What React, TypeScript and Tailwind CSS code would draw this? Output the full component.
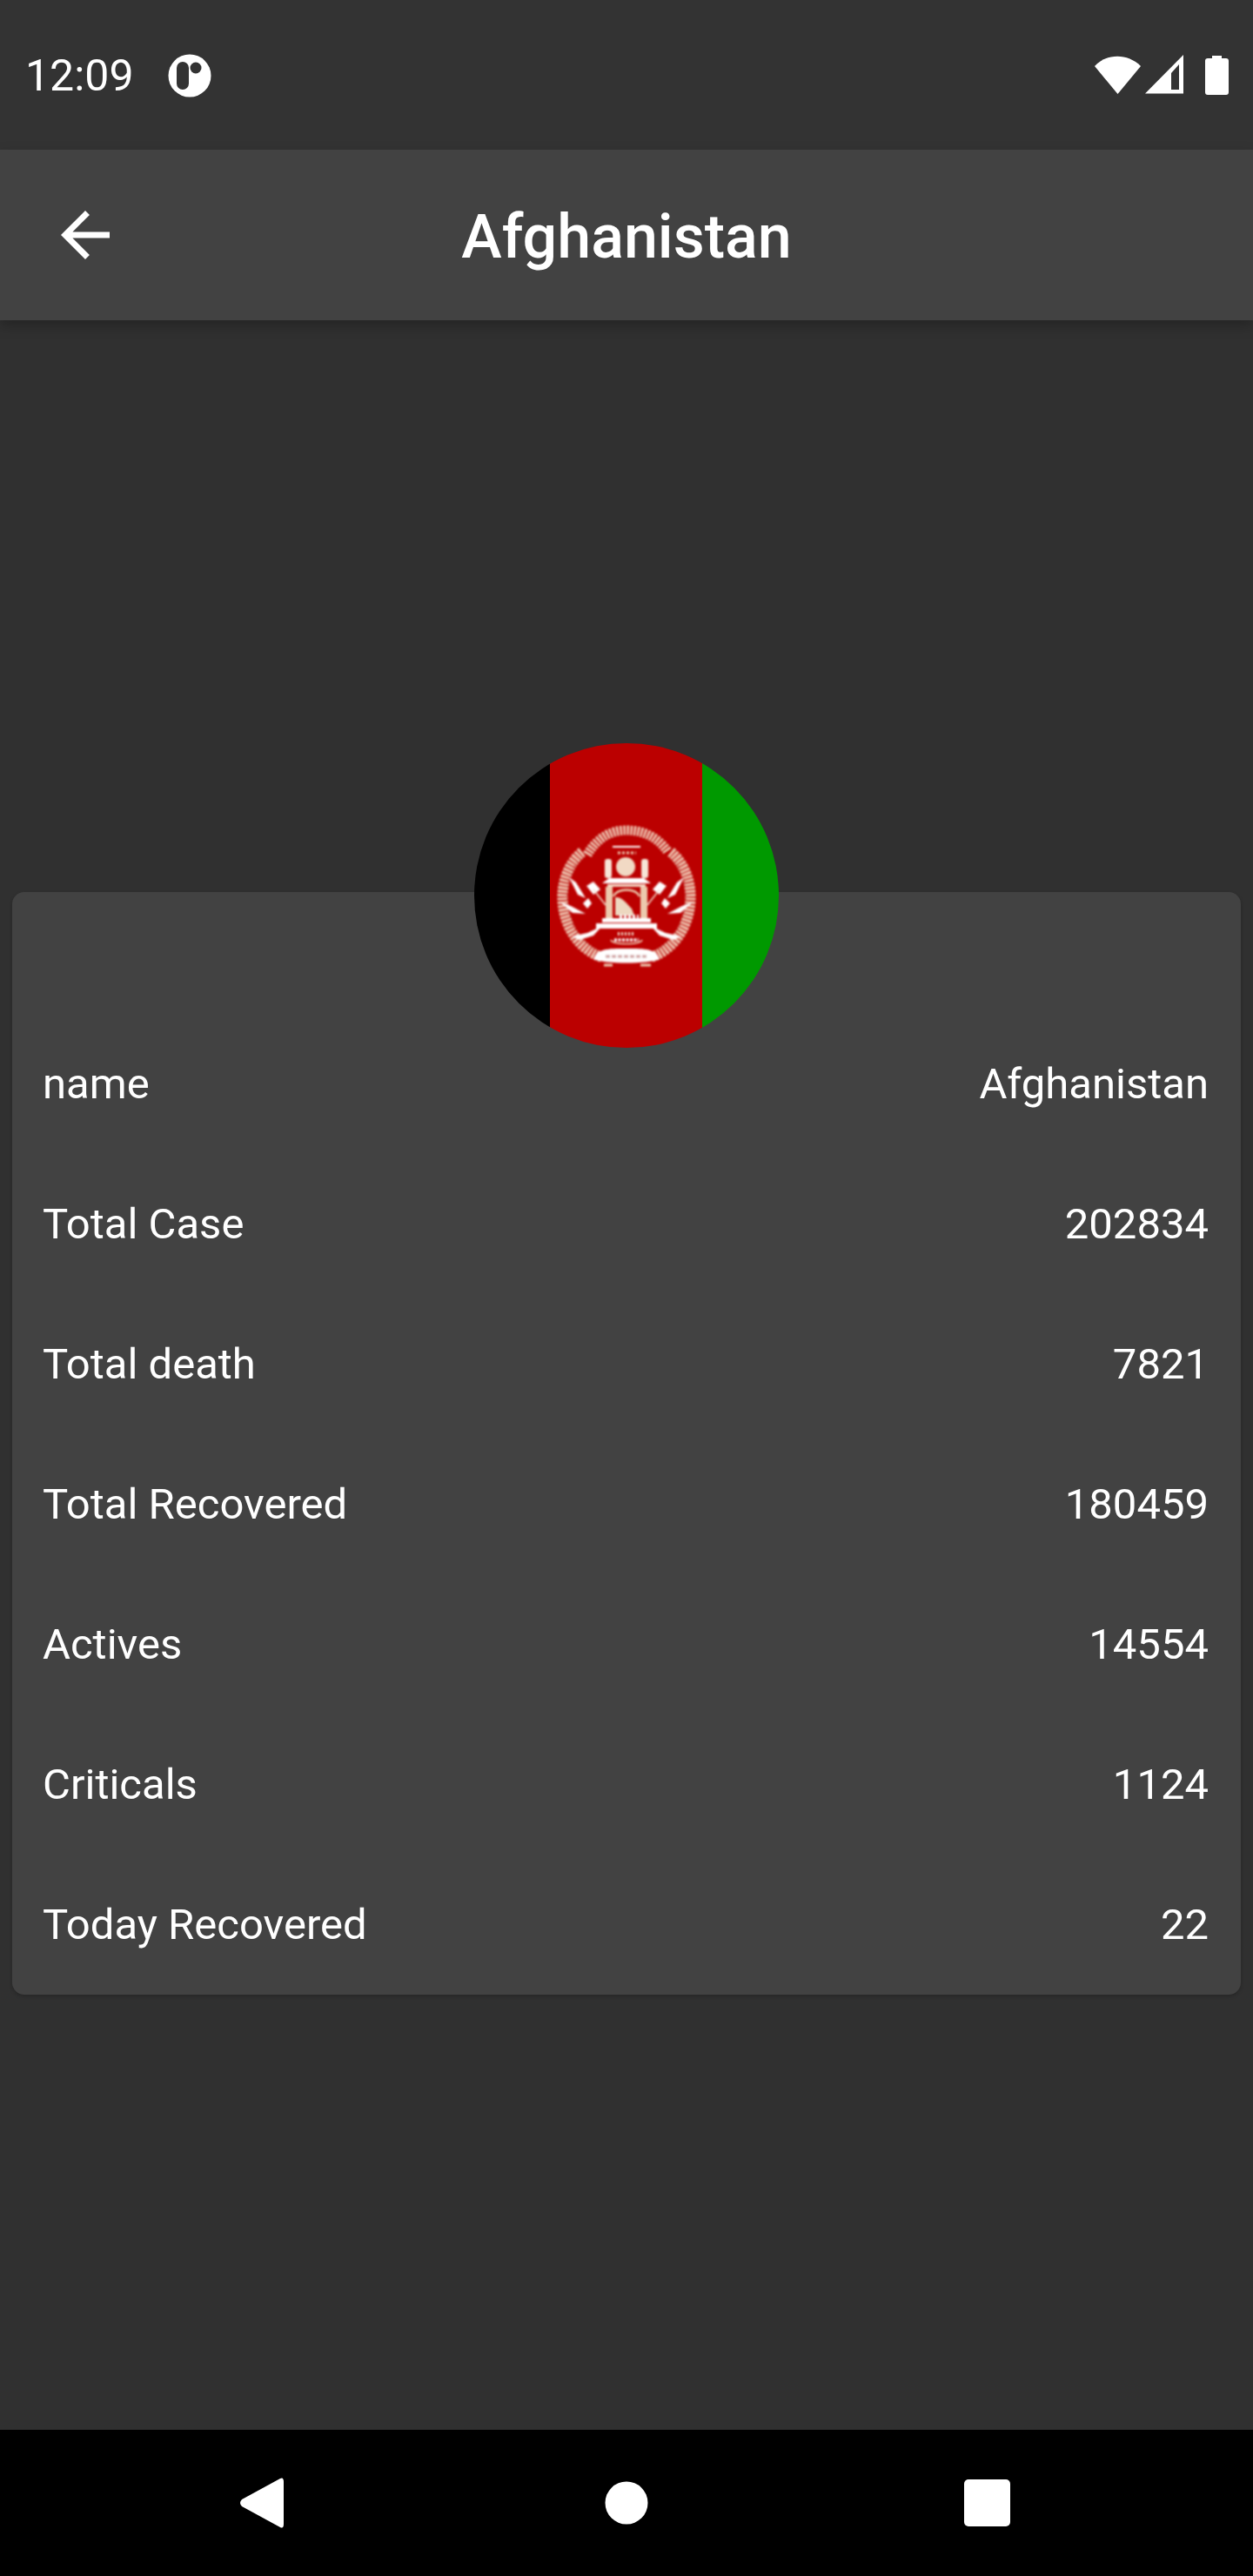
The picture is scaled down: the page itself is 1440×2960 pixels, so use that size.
import React from 'react';

const rows: [string, string][] = [
  ['name', 'Afghanistan'],
  ['Total Case', '202834'],
  ['Total death', '7821'],
  ['Total Recovered', '180459'],
  ['Actives', '14554'],
  ['Criticals', '1124'],
  ['Today Recovered', '22'],
];

const StatusIcons = () => (
  <svg width="160" height="50" viewBox="0 0 160 50" fill="#fff">
    {/* wifi */}
    <path d="M6 16 C20 1 44 1 59 16 L32.500 48 Z" />
    {/* signal */}
    <path fillRule="evenodd" d="M64 47.500 L108 3 V47.500 Z M94 43 H103 V14 L94 24 Z" />
    {/* battery */}
    <path d="M141 4 H152 V7 H157 Q160 7 160 10 V46 Q160 49 157 49 H136 Q133 49 133 46 V10 Q133 7 136 7 H141 Z" />
  </svg>
);

// half of the wreath, mirrored for the right side
const WreathSide = () => (
  <g fill="none" stroke="#f2d6c0">
    <path d="M49 49 C26 68 20 105 34 135 C42 152 56 165 72 170" strokeWidth="12" strokeDasharray="3 1.200" opacity="0.95" />
    <path d="M47 56 C31 74 27 104 38 131 C45 147 56 157 68 162" strokeWidth="1.500" strokeDasharray="2 3" stroke="#bb0000" />
    <path d="M34 78 L42 84 L53 102 L44 98 Z" fill="#fff" stroke="none" />
    <path d="M23 106 L36 111 L53 120 L38 119 Z" fill="#fff" stroke="none" />
    <path d="M37 146 L55 142 L72 134 L62 145 L46 150 Z" fill="#fff" stroke="none" />
    <path d="M54 88 L62 83 L70 92 L62 98 Z" fill="#fff" stroke="none" />
    <path d="M50 108 L56 102 L60 108 L55 114 Z" fill="#fff" stroke="none" />
    <path d="M62 92 L76 110" strokeWidth="1.500" stroke="#f3e0d0" />
  </g>
);

const Emblem = () => (
  <g transform="translate(75 76)" filter="url(#soft)">
    {/* calligraphy arc */}
    <path d="M55 52 C68 30 85 24 100 24 C118 24 135 31 147 48" fill="none" stroke="#f2d6c0" strokeWidth="11" strokeDasharray="2.500 1.500" />
    <path d="M84 43 H116" stroke="#fff" strokeWidth="2" />
    <path d="M90 50 H111" stroke="#eecdb4" strokeWidth="3" strokeDasharray="3 2" />
    <WreathSide />
    <g transform="translate(200 0) scale(-1 1)">
      <WreathSide />
    </g>
    {/* minarets and dome */}
    <rect x="75" y="57" width="8" height="22" rx="3" fill="#f7e6d8" />
    <rect x="117" y="57" width="8" height="22" rx="3" fill="#f7e6d8" />
    <circle cx="99" cy="66" r="11" fill="#f1d9c4" />
    {/* roof */}
    <path d="M80 79 H120 L128 85 H72 Z" fill="#fff" />
    <rect x="78" y="86" width="44" height="3" fill="#f3d9c6" />
    {/* pillars and arch */}
    <rect x="76" y="89" width="8" height="38" fill="#ecc9ad" />
    <rect x="116" y="89" width="8" height="38" fill="#ecc9ad" />
    <path d="M85 100 C90 90 110 90 115 100" fill="none" stroke="#ecc9ad" strokeWidth="2.500" />
    {/* mihrab */}
    <path d="M87 122 V101 C95 100 100 108 106 114 L109 122 Z" fill="#edd8c0" />
    <path d="M92 123 H114" stroke="#fff" strokeWidth="4" strokeDasharray="3 2" />
    {/* steps */}
    <rect x="72" y="125" width="56" height="5" fill="#fff" />
    <rect x="65" y="131" width="70" height="6" fill="#fff" />
    {/* date */}
    <path d="M90 143 H110" stroke="#f3dccb" strokeWidth="4" strokeDasharray="2 2" />
    <path d="M82 150 C84 156 116 156 118 150" fill="none" stroke="#eecdb4" strokeWidth="1.500" />
    <path d="M86 150 H114" stroke="#fff" strokeWidth="3.500" strokeDasharray="3 1.500" />
    {/* bottom banner */}
    <path d="M62 172 C66 160 78 160 100 160 C122 160 134 160 138 172 C125 178 75 178 62 172 Z" fill="#fff" />
    <path d="M76 169 H124" stroke="#c99" strokeWidth="3" strokeDasharray="5 2" />
    <path d="M74 179 H84 M116 179 H128" stroke="#eecdb4" strokeWidth="3" />
  </g>
);

const Flag = () => (
  <svg width="350" height="350" viewBox="0 0 350 350" className="rounded-full">
    <defs>
      <filter id="soft" x="-10%" y="-10%" width="120%" height="120%">
        <feGaussianBlur stdDeviation="0.8" />
      </filter>
    </defs>
    <rect x="0" y="0" width="87" height="350" fill="#000" />
    <rect x="87" y="0" width="175" height="350" fill="#bb0000" />
    <rect x="262" y="0" width="88" height="350" fill="#009900" />
    <Emblem />
  </svg>
);

export default function App() {
  return (
    <div className="w-[1440px] h-[2960px] flex flex-col bg-[#303030] text-white font-['Roboto',sans-serif]">
      {/* Status bar */}
      <div className="h-[172px] bg-[#333333] flex items-center justify-between pl-[29px] pr-[28px] pb-[2px]">
        <div className="flex items-center gap-[39px] mt-[4px]">
          <span className="text-[50px] leading-none">12:09</span>
          <svg width="50" height="50" viewBox="0 0 50 50">
            <circle cx="25" cy="25" r="24.500" fill="#fff" />
            <rect x="10" y="9" width="14" height="32" rx="7" fill="#333333" />
            <circle cx="32" cy="16" r="6.500" fill="#333333" />
          </svg>
        </div>
        <StatusIcons />
      </div>

      {/* App bar */}
      <div className="relative z-10 h-[196px] bg-[#424242] flex items-center shadow-[0_6px_14px_rgba(0,0,0,0.25)]">
        <svg width="84" height="84" viewBox="0 0 24 24" fill="#fff" className="ml-[56px] shrink-0">
          <path d="M20 11H7.830l5.590-5.590L12 4l-8 8 8 8 1.410-1.410L7.830 13H20v-2z" />
        </svg>
        <h1 className="flex-1 text-center text-[70px] font-medium leading-none pr-[140px] pt-[3px]">Afghanistan</h1>
      </div>

      {/* Body */}
      <div className="flex-1 px-[14px] pt-[657px]">
        <div className="relative bg-[#424242] rounded-[14px] pt-[140px] shadow-[0_2px_4px_rgba(0,0,0,0.2)]">
          <div className="absolute -top-[171px] left-[531px]">
            <Flag />
          </div>
          {rows.map(([label, value]) => (
            <div key={label} className="h-[161px] pl-[35px] pr-[37px] flex items-center justify-between text-[49px] leading-none">
              <span>{label}</span>
              <span>{value}</span>
            </div>
          ))}
        </div>
      </div>

      {/* Navigation bar */}
      <div className="h-[168px] bg-black flex items-center relative">
        <svg width="1440" height="168" viewBox="0 0 1440 168" fill="#fff">
          <path d="M322 56 Q326 54 326 60 V108 Q326 114 322 112 L278 88 Q274 84 278 80 Z" />
          <circle cx="720" cy="84" r="24.500" />
          <rect x="1108" y="57" width="53" height="54" rx="5" />
        </svg>
      </div>
    </div>
  );
}
